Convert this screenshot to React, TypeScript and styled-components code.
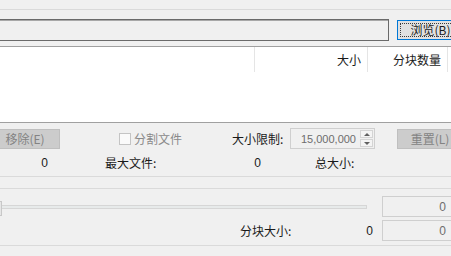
import styled, { createGlobalStyle } from 'styled-components'

const GlobalStyle = createGlobalStyle`
  html, body {
    margin: 0;
    padding: 0;
    background: #f0f0f0;
  }
`

const Window = styled.div`
  width: 451px;
  height: 256px;
  overflow: hidden;
  background: #f0f0f0;
  display: flex;
  flex-direction: column;
  font-family: "Noto Sans CJK SC", "Microsoft YaHei", sans-serif;
  font-size: 12px;
  line-height: 14px;
  color: #1a1a1a;
`

const Rule = styled.div<{ $top: number }>`
  flex-shrink: 0;
  margin-top: ${p => p.$top}px;
  height: 1px;
  background: #dadada;
`

const Row = styled.div<{ $top: number; $h: number }>`
  flex-shrink: 0;
  display: flex;
  align-items: center;
  margin-top: ${p => p.$top}px;
  height: ${p => p.$h}px;
  white-space: nowrap;
`

const PathInput = styled.div`
  flex-shrink: 0;
  width: 389px;
  height: 22px;
  box-sizing: border-box;
  border: 1px solid #6a6a6a;
  border-left: none;
  box-shadow: inset 0 1px 0 #a8a8a8;
  background: #f0f0f0;
`

const Button = styled.div<{ $w: number; $left: number; $focused?: boolean; $disabled?: boolean }>`
  flex-shrink: 0;
  position: relative;
  display: flex;
  align-items: center;
  justify-content: center;
  width: ${p => p.$w}px;
  height: 20px;
  margin-left: ${p => p.$left}px;
  box-sizing: border-box;
  background: ${p => (p.$disabled ? '#cccccc' : '#e1e1e1')};
  border: 1px solid ${p => (p.$focused ? '#0078d7' : p.$disabled ? '#bfbfbf' : '#adadad')};
  color: ${p => (p.$disabled ? '#838383' : '#1a1a1a')};

  ${p =>
    p.$focused &&
    `&::after {
      content: '';
      position: absolute;
      inset: 2px;
      border: 1px dotted #3c3c3c;
    }`}
`

const FileList = styled.div`
  flex-shrink: 0;
  margin-top: 5px;
  height: 77px;
  box-sizing: border-box;
  border-top: 1px solid #a0a0a0;
  border-bottom: 1px solid #a0a0a0;
  background: #ffffff;
`

const HeaderRow = styled.div`
  display: flex;
  height: 25px;
`

const HeaderCell = styled.div<{ $w?: number }>`
  ${p => (p.$w ? `width: ${p.$w}px;` : 'flex: 1;')}
  flex-shrink: 0;
  box-sizing: border-box;
  display: flex;
  align-items: center;
  justify-content: flex-end;
  padding-right: 6px;
  border-right: 1px solid #e5e5e5;
  color: #1a1a1a;
`

const CheckWrap = styled.div<{ $left: number; $w: number }>`
  display: flex;
  align-items: center;
  margin-left: ${p => p.$left}px;
  width: ${p => p.$w}px;
  flex-shrink: 0;
  color: #8a8a8a;
`

const CheckBox = styled.span`
  width: 12px;
  height: 12px;
  box-sizing: border-box;
  border: 1px solid #c4c4c4;
  background: #fafafa;
  margin-right: 3px;
`

const Label = styled.div<{ $left?: number; $w?: number }>`
  flex-shrink: 0;
  margin-left: ${p => p.$left ?? 0}px;
  ${p => (p.$w ? `width: ${p.$w}px;` : '')}
`

const Value = styled.div<{ $left?: number; $w: number }>`
  flex-shrink: 0;
  margin-left: ${p => p.$left ?? 0}px;
  width: ${p => p.$w}px;
  text-align: right;
  font-family: "Liberation Sans", Arial, sans-serif;
  font-size: 12px;
`

const SpinBox = styled.div`
  flex-shrink: 0;
  display: flex;
  align-items: center;
  width: 85px;
  height: 21px;
  box-sizing: border-box;
  border: 1px solid #cfcfcf;
  background: #f0f0f0;
`

const SpinText = styled.div`
  flex: 1;
  text-align: right;
  padding-right: 4px;
  font-family: "Liberation Sans", Arial, sans-serif;
  font-size: 11px;
  color: #6d6d6d;
`

const SpinButtons = styled.div`
  display: flex;
  flex-direction: column;
  width: 13px;
  height: 17px;
  margin-right: 1px;
  gap: 1px;
`

const SpinHalf = styled.div<{ $down?: boolean }>`
  flex: 1;
  display: flex;
  align-items: center;
  justify-content: center;
  box-sizing: border-box;
  border: 1px solid #d4d4d4;
  background: #f4f4f4;

  &::before {
    content: '';
    border-left: 3px solid transparent;
    border-right: 3px solid transparent;
    ${p => (p.$down ? 'border-top: 3px solid #606060;' : 'border-bottom: 3px solid #606060;')}
  }
`

const Track = styled.div`
  position: relative;
  flex-shrink: 0;
  width: 367px;
  height: 4px;
  box-sizing: border-box;
  background: #e7eaea;
  border: 1px solid #d6d6d6;
`

const Thumb = styled.div`
  position: absolute;
  left: -10px;
  top: -5px;
  width: 11px;
  height: 15px;
  box-sizing: border-box;
  border: 1px solid #c8c8c8;
  background: #e6e6e6;
`

const NumBox = styled.div<{ $left: number }>`
  flex-shrink: 0;
  margin-left: ${p => p.$left}px;
  width: 75px;
  height: 21px;
  box-sizing: border-box;
  border: 1px solid #cfcfcf;
  background: #f0f0f0;
  display: flex;
  align-items: center;
  justify-content: flex-end;
  padding-right: 10px;
  font-family: "Liberation Sans", Arial, sans-serif;
  font-size: 12px;
  color: #6d6d6d;
`

function App() {
  return (
    <Window>
      <GlobalStyle />
      <Rule $top={9} />
      <Row $top={9} $h={22}>
        <PathInput />
        <Button $w={67} $left={8} $focused>
          浏览(B)
        </Button>
      </Row>
      <FileList>
        <HeaderRow>
          <HeaderCell $w={255} />
          <HeaderCell $w={113}>大小</HeaderCell>
          <HeaderCell $w={80}>分块数量</HeaderCell>
          <HeaderCell />
        </HeaderRow>
      </FileList>
      <Row $top={5} $h={21}>
        <Button $w={70} $left={-10} $disabled>
          移除(E)
        </Button>
        <CheckWrap $left={59} $w={113}>
          <CheckBox />
          分割文件
        </CheckWrap>
        <Label $w={58}>大小限制:</Label>
        <SpinBox>
          <SpinText>15,000,000</SpinText>
          <SpinButtons>
            <SpinHalf />
            <SpinHalf $down />
          </SpinButtons>
        </SpinBox>
        <Button $w={66} $left={22} $disabled>
          重置(L)
        </Button>
      </Row>
      <Row $top={7} $h={14}>
        <Value $w={48}>0</Value>
        <Label $left={57} $w={60}>最大文件:</Label>
        <Value $w={96}>0</Value>
        <Label $left={54}>总大小:</Label>
      </Row>
      <Rule $top={6} />
      <Rule $top={11} />
      <Row $top={7} $h={21}>
        <Track>
          <Thumb />
        </Track>
        <NumBox $left={15}>0</NumBox>
      </Row>
      <Row $top={3} $h={21}>
        <Label $left={240} $w={52}>分块大小:</Label>
        <Value $w={81}>0</Value>
        <NumBox $left={9}>0</NumBox>
      </Row>
      <Rule $top={4} />
    </Window>
  )
}

export default App
